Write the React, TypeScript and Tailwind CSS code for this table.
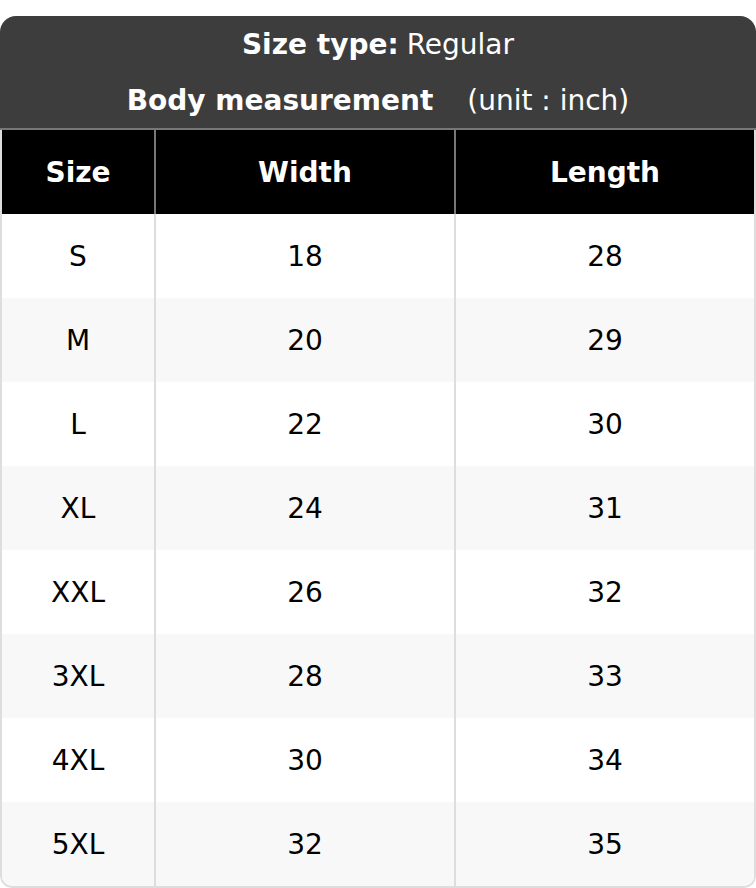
const rows = [
  ['S', '18', '28'],
  ['M', '20', '29'],
  ['L', '22', '30'],
  ['XL', '24', '31'],
  ['XXL', '26', '32'],
  ['3XL', '28', '33'],
  ['4XL', '30', '34'],
  ['5XL', '32', '35'],
];

export default function App() {
  return (
    <div className="bg-white pt-4 min-h-screen" style={{ fontFamily: '"DejaVu Sans", Verdana, sans-serif' }}>
      <div className="w-[756px] overflow-hidden rounded-t-[16px] rounded-b-[12px]">
        {/* Title block */}
        <div className="bg-[#3d3d3d] text-white text-[28px] border-b-2 border-[#777]">
          <div className="h-[56px] pt-[2px] flex items-center justify-center">
            <span className="font-bold">Size type:</span>
            <span className="ml-2">Regular</span>
          </div>
          <div className="h-[56px] pt-[2px] flex items-center justify-center">
            <span className="font-bold">Body measurement</span>
            <span className="ml-[34px]">(unit : inch)</span>
          </div>
        </div>

        {/* Table */}
        <div className="border-x-2 border-b-2 border-[#ddd] rounded-b-[12px] overflow-hidden text-[28px]">
          <div className="grid grid-cols-[154px_300px_1fr] bg-black text-white font-bold">
            <div className="h-[84px] pt-[2px] flex items-center justify-center border-r-2 border-[#777]">Size</div>
            <div className="h-[84px] pt-[2px] flex items-center justify-center border-r-2 border-[#777]">Width</div>
            <div className="h-[84px] pt-[2px] flex items-center justify-center">Length</div>
          </div>
          {rows.map((r, i) => (
            <div
              key={r[0]}
              className={`grid grid-cols-[154px_300px_1fr] text-black ${i % 2 === 1 ? 'bg-[#f8f8f8]' : 'bg-white'}`}
            >
              <div className="h-[84px] pt-[2px] flex items-center justify-center border-r-2 border-[#ddd]">{r[0]}</div>
              <div className="h-[84px] pt-[2px] flex items-center justify-center border-r-2 border-[#ddd]">{r[1]}</div>
              <div className="h-[84px] pt-[2px] flex items-center justify-center">{r[2]}</div>
            </div>
          ))}
        </div>
      </div>
    </div>
  );
}
